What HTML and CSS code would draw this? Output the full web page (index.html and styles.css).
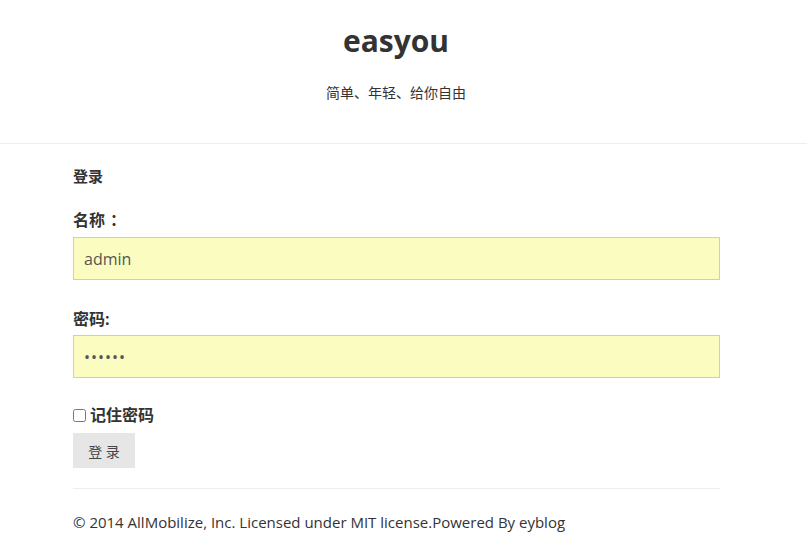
FILE: index.html
```html
<!DOCTYPE html>
<html lang="zh-CN">
<head>
<meta charset="utf-8">
<title>easyou</title>
<link rel="stylesheet" href="styles.css">
</head>
<body>
<header class="site-header">
  <h1 class="site-title">easyou</h1>
  <p class="site-desc">简单、年轻、给你自由</p>
</header>
<main class="main">
  <h2 class="section-title">登录</h2>
  <form class="login-form">
    <div class="field">
      <label class="field-label">名称<span class="colon">：</span></label>
      <input class="field-input" type="text" value="admin">
    </div>
    <div class="field">
      <label class="field-label">密码:</label>
      <input class="field-input field-pass" type="password" value="123456">
    </div>
    <label class="remember"><input type="checkbox" class="remember-box"> 记住密码</label>
    <button type="button" class="btn">登 录</button>
  </form>
  <hr class="divider">
  <footer class="footer">© 2014 AllMobilize, Inc. Licensed under MIT license.Powered By eyblog</footer>
</main>
</body>
</html>
```
FILE: styles.css
```css
html, body {
  margin: 0;
  padding: 0;
  background: #fff;
  color: #333;
  font-family: "Open Sans", "Noto Sans CJK SC", sans-serif;
}
.site-header {
  border-bottom: 1px solid #eee;
  padding: 20px 15px 0 0;
  height: 123px;
  box-sizing: content-box;
  text-align: center;
}
.site-title {
  margin: 0;
  font-size: 30px;
  font-weight: 700;
  line-height: 42px;
}
.site-desc {
  margin: 21px 0 0;
  font-size: 14px;
  line-height: 20px;
}
.main {
  margin: 0 87px 0 73px;
}
.section-title {
  margin: 21px 0 0;
  font-size: 15px;
  font-weight: 700;
  line-height: 22px;
  height: 22px;
}
.login-form {
  display: flex;
  flex-direction: column;
  align-items: flex-start;
}
.field {
  align-self: stretch;
  display: flex;
  flex-direction: column;
}
.field-label {
  margin-top: 21px;
  font-size: 16px;
  font-weight: 700;
  line-height: 24px;
  height: 24px;
  overflow: hidden;
  margin-bottom: 5px;
}
.colon {
  padding-left: 5px;
}
.field + .field .field-label {
  margin-top: 27px;
  margin-bottom: 4px;
}
.field-input {
  height: 43px;
  box-sizing: border-box;
  border: 1px solid #ccc;
  background: #fafcc0;
  padding: 0 10px;
  font-family: "Open Sans", sans-serif;
  font-size: 16px;
  color: #555;
  outline: none;
  margin: 0;
}
.field-pass {
  letter-spacing: 1px;
}
.remember {
  margin-top: 26px;
  display: flex;
  align-items: center;
  font-size: 16px;
  font-weight: 700;
  line-height: 22px;
  height: 22px;
}
.remember-box {
  margin: 0 4px 0 0;
  width: 13px;
  height: 13px;
}
.btn {
  margin-top: 7px;
  width: 62px;
  height: 35px;
  border: none;
  background: #e6e6e6;
  color: #444;
  font-family: "Open Sans", "Noto Sans CJK SC", sans-serif;
  font-size: 14px;
  padding: 0;
}
.divider {
  margin: 20px 0 0;
  border: none;
  border-top: 1px solid #eee;
  height: 0;
}
.footer {
  margin-top: 21px;
  font-size: 15px;
  line-height: 24px;
}
```
